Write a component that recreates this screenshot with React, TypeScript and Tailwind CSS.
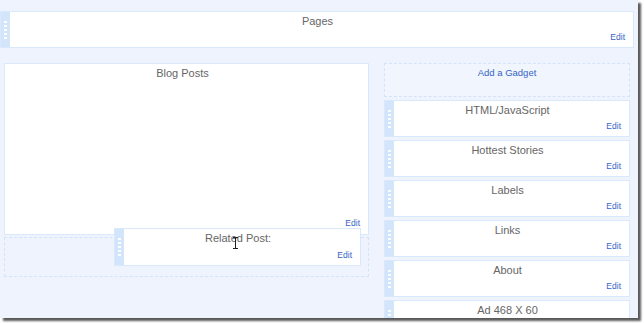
import React from "react";

const font = { fontFamily: '"Liberation Sans", Arial, sans-serif' };

// Drag handle with the little white dashes
function Handle() {
  return (
    <div className="w-[9px] shrink-0 bg-[#d2e5fb] flex flex-col items-center justify-center gap-[2px]">
      {[0, 1, 2, 3, 4].map((i) => (
        <div key={i} className="w-[3px] h-[2px] bg-white" />
      ))}
    </div>
  );
}

function Widget({
  title,
  edit = true,
  className = "",
}: {
  title: string;
  edit?: boolean;
  className?: string;
}) {
  return (
    <div className={`flex border border-[#dae8fb] bg-white ${className}`}>
      <Handle />
      <div className="flex-1 flex flex-col justify-between pt-[3px] pb-[5px] pr-[8px]">
        <div className="text-center text-[11px] leading-[13px] text-[#666]">{title}</div>
        {edit && <div className="text-right text-[8.5px] leading-[10px] text-[#3563c6]">Edit</div>}
      </div>
    </div>
  );
}

export default function App() {
  const side = ["HTML/JavaScript", "Hottest Stories", "Labels", "Links", "About"];

  return (
    <div className="w-[644px] h-[323px] bg-white overflow-hidden" style={font}>
      <div className="w-[638px] h-[318px] bg-[#eef3fd] shadow-[3px_3px_2px_rgba(0,0,0,0.65)] overflow-hidden pt-[11px]">
        {/* Pages */}
        <Widget title="Pages" className="w-[634px] h-[37px]" />

        <div className="flex mt-[15px] pl-[4px] gap-[15px]">
          {/* Left column */}
          <div className="relative w-[365px] shrink-0">
            <div className="h-[172px] border border-[#dae8fb] bg-white flex flex-col justify-between pt-[3px] pb-[6px] pr-[8px]">
              <div className="text-center text-[11px] leading-[13px] text-[#666]">Blog Posts</div>
              <div className="text-right text-[8.5px] leading-[10px] text-[#3563c6]">Edit</div>
            </div>
            <div className="mt-[2px] h-[40px] border border-dashed border-[#d4e3f8]" />

            {/* widget being dragged */}
            <div className="absolute left-[110px] top-[165px]">
              <Widget title="Related Post:" className="w-[247px] h-[38px]" />
              <svg
                className="absolute left-[118px] top-[9px]"
                width="7"
                height="12"
                viewBox="0 0 7 12"
              >
                <path
                  d="M1 0.5h5M1 11.5h5M3.5 0.5v11"
                  stroke="#222"
                  strokeWidth="1"
                  fill="none"
                />
              </svg>
            </div>
          </div>

          {/* Right column */}
          <div className="w-[246px] shrink-0 flex flex-col gap-[3px]">
            <div className="h-[34px] border border-dashed border-[#d4e3f8] bg-[#f1f6fe] text-center text-[9.5px] leading-[12px] pt-[3px] text-[#3563c6]">
              Add a Gadget
            </div>
            {side.map((t) => (
              <Widget key={t} title={t} className="h-[37px] shrink-0" />
            ))}
            <Widget title="Ad 468 X 60" edit={false} className="h-[37px] shrink-0" />
          </div>
        </div>
      </div>
    </div>
  );
}
